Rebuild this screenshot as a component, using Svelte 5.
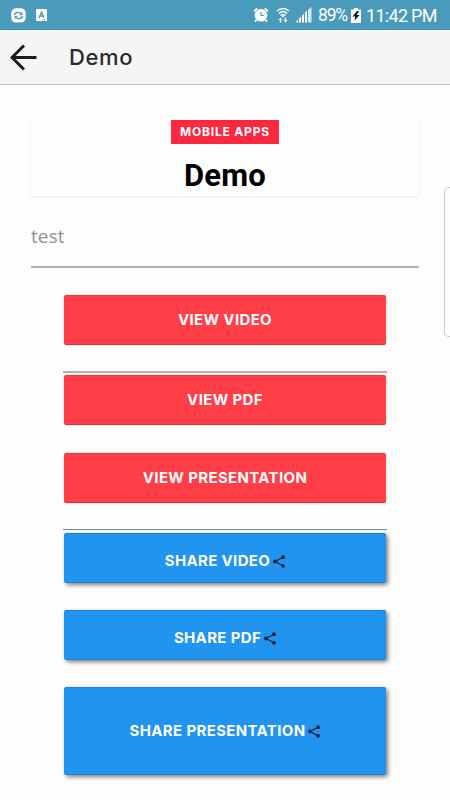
<script>
  const viewButtons = [
    { label: 'VIEW VIDEO', rule: 'soft' },
    { label: 'VIEW PDF' },
    { label: 'VIEW PRESENTATION', rule: 'sharp' }
  ];

  const shareButtons = [
    { label: 'SHARE VIDEO' },
    { label: 'SHARE PDF' },
    { label: 'SHARE PRESENTATION', tall: true }
  ];
</script>

<div class="screen">
  <div class="status">
    <svg class="sync" width="15" height="15" viewBox="0 0 15 15">
      <rect x="0.3" y="0.2" width="14.4" height="14.4" rx="5" fill="#fff" />
      <path d="M3.300 7C4.200 4.200 7.500 3.600 9.800 5.300M11.700 8C10.800 10.800 7.500 11.400 5.200 9.700" fill="none" stroke="#4a9abb" stroke-width="1.400" />
      <path d="M11.500 3.800V7.200H7.800ZM3.500 11.200V7.800H7.200Z" fill="#4a9abb" />
    </svg>
    <svg class="letter" width="11" height="12" viewBox="0 0 11 12">
      <rect width="11" height="12" rx="0.8" fill="#fff" />
      <path d="M3 9L5.500 3L8 9M4 7H7" fill="none" stroke="#4a9abb" stroke-width="1.400" />
      <path d="M6 10.500h1.200M8 10.500h1.200" stroke="#4a9abb" stroke-width="0.700" />
    </svg>

    <svg class="alarm" width="16" height="16" viewBox="0 0 16 16">
      <circle cx="8" cy="8.200" r="6.300" fill="#fff" />
      <path d="M1 4.300L4.300 1.300M15 4.300L11.700 1.300M3.500 13L2 14.700M12.500 13L14 14.700" stroke="#fff" stroke-width="1.800" />
      <path d="M8 4.800V8.500H11" fill="none" stroke="#4a9abb" stroke-width="1.200" />
    </svg>
    <svg class="wifi" width="14" height="16" viewBox="0 0 14 16">
      <path d="M1 4.100Q7-1.300 13 4.100M2.800 6.400Q7 2.600 11.200 6.400M4.600 8.500Q7 6.300 9.400 8.500" fill="none" stroke="#fff" stroke-width="1.400" />
      <circle cx="7" cy="9.500" r="1.100" fill="#fff" />
      <path d="M2.500 13L4.500 10.800L6.500 13H5.200V15.500H3.800V13ZM7.500 13H8.800V10.800H10.200V13H11.500L9.500 15.500Z" fill="#fff" />
    </svg>
    <svg class="signal" width="16" height="16" viewBox="0 0 16 16">
      <path d="M0.500 15.500v-1.500l1.500-1.500v3zM3 15.500v-4l2-2v6zM6 15.500v-7l2-2v9zM9 15.500V5.500l2-2v12z" fill="#fff" />
      <path d="M12 15.500V2.700L15.500 0v15.500z" fill="#fff" fill-opacity="0.800" />
    </svg>
    <span class="percent">89%</span>
    <svg class="battery" width="10" height="15" viewBox="0 0 10 15">
      <path d="M3 0h4v1.500h3V15H0V1.500h3z" fill="#fff" />
      <path d="M6 3L1.500 8.500H4.300L3.500 12.800L8.500 7H5.600L8 3Z" fill="#111" />
    </svg>
    <span class="time">11:42 PM</span>
  </div>

  <header>
    <svg width="27" height="27" viewBox="0 0 27 27" fill="none" stroke="#1a1a1a" stroke-width="3">
      <path d="M26.500 13.500H2.300M14 1.500L2 13.500L14 25.500" />
    </svg>
    <span>Demo</span>
  </header>

  <main>
    <section class="card">
      <span class="tag">MOBILE APPS</span>
      <h1>Demo</h1>
    </section>

    <p>test</p>
    <hr />

    <div class="actions">
      {#each viewButtons as button}
        <button class="view">{button.label}</button>
        {#if button.rule}
          <hr class={button.rule} />
        {:else}
          <div class="gap"></div>
        {/if}
      {/each}

      {#each shareButtons as button}
        <button class="share" class:tall={button.tall}>
          {button.label}
          <svg width="12" height="13" viewBox="0 0 12 13">
            <path d="M10 2.300L2 6.500L10 10.700" fill="none" stroke="#132238" stroke-width="1.200" />
            <circle cx="10" cy="2.200" r="1.900" fill="#132238" />
            <circle cx="2" cy="6.500" r="1.900" fill="#132238" />
            <circle cx="10" cy="10.800" r="1.900" fill="#132238" />
          </svg>
        </button>
      {/each}
    </div>
  </main>

  <div class="edge-panel"></div>
</div>

<style>
  :global(body) {
    margin: 0;
    background: #fdfdfd;
  }

  .screen {
    position: relative;
    width: 450px;
    height: 800px;
    overflow: hidden;
    background: #fdfdfd;
    font-family: Inter, 'Open Sans', sans-serif;
  }

  .status {
    display: flex;
    align-items: center;
    box-sizing: border-box;
    height: 30px;
    padding: 1px 13px 0 11px;
    background: #4a9abb;
    border-bottom: 1px solid #3d8fac;
    color: #fff;
    font: 18px/29px Roboto, sans-serif;
    white-space: nowrap;
  }

  .status svg {
    flex: none;
  }

  .letter {
    margin-left: 10px;
  }

  .alarm {
    margin-left: auto;
  }

  .wifi {
    margin-left: 7px;
  }

  .signal {
    margin-left: 6px;
  }

  .percent {
    width: 29px;
    margin-left: 6px;
    font-size: 17.5px;
    letter-spacing: -1.2px;
  }

  .battery {
    margin-left: 4px;
  }

  .time {
    width: 71px;
    margin-left: 5px;
    letter-spacing: -0.7px;
  }

  header {
    display: flex;
    align-items: center;
    box-sizing: border-box;
    height: 55px;
    padding-left: 10px;
    background: #f5f5f5;
    border-bottom: 1px solid #c4c4c4;
    color: #2b2b2b;
    font-size: 22px;
    font-weight: 500;
  }

  header span {
    margin: -1px 0 0 32px;
    letter-spacing: 0.6px;
  }

  main {
    padding: 33px 31px 0;
  }

  .card {
    display: flex;
    flex-direction: column;
    align-items: center;
    box-sizing: border-box;
    height: 78px;
    padding-top: 2px;
    background: #fefefe;
    box-shadow: 0 1px 3px rgba(0, 0, 0, 0.09);
  }

  .tag {
    width: 108px;
    height: 24px;
    background: #fc283f;
    color: #fff;
    font-size: 12px;
    font-weight: 700;
    line-height: 24px;
    letter-spacing: 0.8px;
    text-align: center;
  }

  h1 {
    margin: 13px 0 0;
    color: #000;
    font: 700 31px/37px Roboto, sans-serif;
    letter-spacing: 0.2px;
  }

  p {
    margin: 27px 0 0;
    color: #919191;
    font: 400 19px/26px 'Open Sans', sans-serif;
    letter-spacing: 0.1px;
  }

  hr {
    height: 2px;
    margin: 17px 0 0;
    border: 0;
    background: #b1b1b1;
  }

  .actions {
    display: flex;
    flex-direction: column;
    padding: 27px 33px 0;
  }

  .actions hr {
    margin: 26px -1px 2px;
  }

  .actions .sharp {
    height: 1px;
    margin-bottom: 3px;
    background: #858585;
  }

  button {
    display: flex;
    justify-content: center;
    align-items: center;
    box-sizing: border-box;
    flex: none;
    height: 50px;
    padding: 0;
    border: 0;
    border-radius: 3px;
    color: #fff;
    font: 700 15px/20px Inter, 'Open Sans', sans-serif;
    letter-spacing: 0.35px;
    white-space: nowrap;
  }

  .view {
    background: #ff3e47;
    box-shadow: inset 0 1px #df3d49, inset 0 -1px #cc3540, 0 0 2px rgba(255, 62, 71, 0.4);
  }

  .gap {
    height: 28px;
  }

  .share {
    margin-bottom: 27px;
    padding-top: 6px;
    background: #2194f0;
    box-shadow: inset 0 1px #1c80d4, inset 0 -1px #2183d0, 2px 2px 4px rgba(0, 0, 0, 0.5);
  }

  .share svg {
    margin-left: 3px;
  }

  .tall {
    height: 88px;
    padding-top: 0;
  }

  .edge-panel {
    position: absolute;
    top: 187px;
    right: -8px;
    box-sizing: border-box;
    width: 14px;
    height: 150px;
    border: 1px solid #c8c8c8;
    border-radius: 5px;
  }
</style>
